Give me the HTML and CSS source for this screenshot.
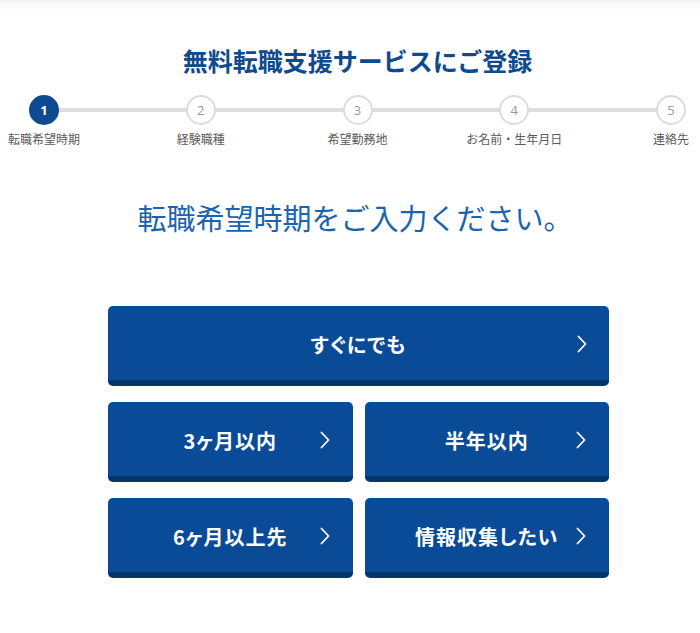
FILE: index.html
```html
<!DOCTYPE html>
<html lang="ja">
<head>
<meta charset="utf-8">
<link rel="stylesheet" href="styles.css">
</head>
<body>
<div class="page">
  <h1 class="title">無料転職支援サービスにご登録</h1>
  <ol class="steps">
    <li class="step active"><span class="circle">1</span><span class="label">転職希望時期</span></li>
    <li class="step"><span class="circle">2</span><span class="label">経験職種</span></li>
    <li class="step"><span class="circle">3</span><span class="label">希望勤務地</span></li>
    <li class="step"><span class="circle">4</span><span class="label">お名前・生年月日</span></li>
    <li class="step"><span class="circle">5</span><span class="label">連絡先</span></li>
  </ol>
  <h2 class="question">転職希望時期をご入力ください。</h2>
  <div class="choices">
    <button class="choice wide"><span class="text">すぐにでも</span><svg class="chev" viewBox="0 0 10 18" width="10" height="18"><polyline points="1.5,1.5 8.5,9 1.5,16.5" fill="none" stroke="#fff" stroke-width="1.8" stroke-linecap="round" stroke-linejoin="round"/></svg></button>
    <button class="choice"><span class="text">3ヶ月以内</span><svg class="chev" viewBox="0 0 10 18" width="10" height="18"><polyline points="1.5,1.5 8.5,9 1.5,16.5" fill="none" stroke="#fff" stroke-width="1.8" stroke-linecap="round" stroke-linejoin="round"/></svg></button>
    <button class="choice"><span class="text">半年以内</span><svg class="chev" viewBox="0 0 10 18" width="10" height="18"><polyline points="1.5,1.5 8.5,9 1.5,16.5" fill="none" stroke="#fff" stroke-width="1.8" stroke-linecap="round" stroke-linejoin="round"/></svg></button>
    <button class="choice"><span class="text">6ヶ月以上先</span><svg class="chev" viewBox="0 0 10 18" width="10" height="18"><polyline points="1.5,1.5 8.5,9 1.5,16.5" fill="none" stroke="#fff" stroke-width="1.8" stroke-linecap="round" stroke-linejoin="round"/></svg></button>
    <button class="choice"><span class="text">情報収集したい</span><svg class="chev" viewBox="0 0 10 18" width="10" height="18"><polyline points="1.5,1.5 8.5,9 1.5,16.5" fill="none" stroke="#fff" stroke-width="1.8" stroke-linecap="round" stroke-linejoin="round"/></svg></button>
  </div>
</div>
</body>
</html>
```

FILE: styles.css
```css
* { box-sizing: border-box; }
html, body {
  margin: 0;
  padding: 0;
  background: #fff;
}
body {
  font-family: "Noto Sans CJK JP", "Noto Sans", sans-serif;
  width: 700px;
  height: 633px;
  overflow: hidden;
  background: linear-gradient(#efefef 0, #f8f8f8 3px, #fdfdfd 8px, #fff 14px);
}
.page {
  padding-top: 42px;
}
.title {
  margin: 0;
  padding-left: 15px;
  text-align: center;
  font-size: 25px;
  line-height: 36px;
  font-weight: 700;
  color: #0f4a8c;
  letter-spacing: 0;
}
.steps {
  list-style: none;
  margin: 17px 14px 0 29px;
  padding: 0;
  display: flex;
  justify-content: space-between;
  position: relative;
}
.steps::before {
  content: "";
  position: absolute;
  left: 15px;
  right: 15px;
  top: 13px;
  height: 4px;
  background: #dedede;
}
.step {
  width: 30px;
  display: flex;
  flex-direction: column;
  align-items: center;
  position: relative;
}
.circle {
  width: 30px;
  height: 30px;
  border-radius: 50%;
  border: 2px solid #dcdcdc;
  background: #fff;
  color: #9a9a9a;
  font-family: "Open Sans", "Noto Sans", sans-serif;
  font-size: 13px;
  display: flex;
  align-items: center;
  justify-content: center;
}
.step.active .circle {
  background: #0d4a8f;
  border-color: #0d4a8f;
  color: #fff;
  font-weight: 700;
}
.label {
  margin-top: 6px;
  font-size: 12px;
  line-height: 16px;
  color: #5a5a5a;
  white-space: nowrap;
}
.question {
  margin: 50px 0 0;
  padding-left: 10px;
  text-align: center;
  font-size: 29px;
  line-height: 40px;
  font-weight: 400;
  color: #1c63ad;
}
.choices {
  margin: 69px 91px 0 108px;
  display: grid;
  grid-template-columns: 1fr 1fr;
  column-gap: 12px;
  row-gap: 16px;
}
.choice {
  position: relative;
  height: 80px;
  border: none;
  border-bottom: 6px solid #05356c;
  border-radius: 5px;
  background: #0a4b97;
  color: #fff;
  font-family: "Noto Sans CJK JP", "Noto Sans", sans-serif;
  font-size: 20px;
  letter-spacing: 1px;
  font-feature-settings: "palt";
  font-weight: 700;
  display: flex;
  align-items: center;
  justify-content: center;
  padding: 0;
  cursor: pointer;
}
.choice.wide {
  grid-column: 1 / span 2;
}
.text {
  margin-top: 3px;
}
.chev {
  position: absolute;
  right: 23px;
  top: 29px;
}
.choice.wide .chev {
  right: 22px;
}
```
